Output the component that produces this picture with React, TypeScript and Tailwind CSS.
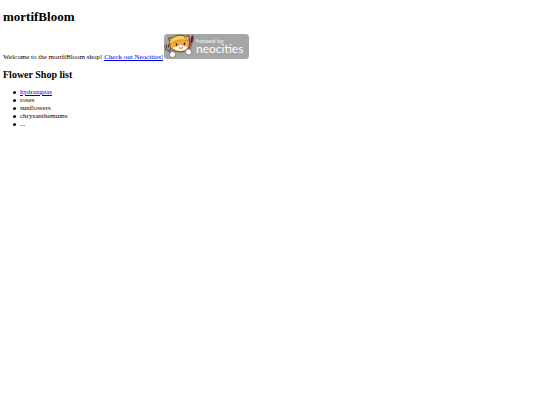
const flowers = ["hydrangeas", "roses", "sunflowers", "chrysanthemums", "..."]

function NeocitiesBadge() {
  return (
    <svg
      viewBox="0 0 85 25"
      className="inline-block h-[25px] w-[85px] align-baseline"
      role="img"
      aria-label="Hosted by Neocities"
    >
      <rect width="85" height="25" rx="3.5" fill="#a6a6a6" />

      {/* Fork */}
      <path d="M1 11l1.500 4.500 3.200-.8-.6-4.500M3.200 10.500l1 4.700 3.800 5" fill="none" stroke="#333" strokeWidth="2" />
      <path d="M1 11l1.500 4.500 3.200-.8-.6-4.500M3.200 10.500l1 4.700 3.800 5" fill="none" stroke="#ccc" strokeWidth="0.8" />

      {/* Brush */}
      <path d="M25 17L27.800 8" stroke="#444" strokeWidth="1.800" />
      <path d="M25.200 16.500L27.600 9" stroke="#d66" strokeWidth="1" />
      <path d="M26.800 8c-.4-2.500.4-5 1.900-6.500 .9 2 .6 4.500-.6 6.700z" fill="#8a2020" stroke="#3a1515" strokeWidth="0.6" />

      {/* Cat */}
      <path
        d="M4.500 4l4.500-.2C12 .8 19 .4 21.500 2.500l3.500-1 .5 6.500c.4 4-1.500 8-5 9.200-4 1.200-8.500.8-11.500-1C6 14 4.800 11.500 6 8.500z"
        fill="#f3a548"
        stroke="#4a2c10"
        strokeWidth="0.8"
      />
      <path d="M8.500 13.500c1.500-.8 3-.8 4.800-.8l3.500-2 3.200 1.500 3.800.3c-.8 2.600-2.800 3.800-5.500 4.200-3.500.4-7.800-.2-9.800-3.200z" fill="#fff5e4" />
      <path d="M5.500 8C7.500 1.500 19 0 24 7C18 4.800 11 6 7 10z" fill="#f9cf4e" stroke="#a06c1c" strokeWidth="0.5" />
      <path d="M9.500 5c3-2.500 7-3 10.500-1.800" fill="none" stroke="#ffed92" strokeWidth="0.9" />
      <ellipse cx="12.500" cy="10.500" rx="0.8" ry="1.200" fill="#222" />
      <ellipse cx="20.500" cy="9.800" rx="0.8" ry="1.200" fill="#222" />
      <path d="M15 13.600l2 .9 2-1.200" fill="none" stroke="#333" strokeWidth="0.6" />

      {/* Paws */}
      <circle cx="8.500" cy="20.500" r="3" fill="#fff" stroke="#555" strokeWidth="0.6" />
      <circle cx="24.500" cy="18" r="3" fill="#fff" stroke="#555" strokeWidth="0.6" />

      <text x="32" y="9" fill="#fff" fontSize="6" fontFamily="'Open Sans', sans-serif">
        hosted by
      </text>
      <text x="32" y="19" fill="#fff" fontSize="12" fontFamily="Lato, sans-serif">
        neocities
      </text>
    </svg>
  )
}

export default function App() {
  return (
    <main className="px-[3px] py-[9px] font-['Liberation_Serif',serif] text-[7px] leading-2 text-black">
      <h1 className="text-[13px] leading-4 font-bold">mortifBloom</h1>
      <p className="mt-[9px]">
        Welcome to the mortfiBloom shop!{" "}
        <a href="https://neocities.org" className="text-[#0000ee] underline">
          Check out Neocities!
        </a>
        <a href="https://neocities.org" className="ml-px">
          <NeocitiesBadge />
        </a>
      </p>
      <h2 className="mt-2 text-[10px] leading-3 font-bold">Flower Shop list</h2>
      <ul className="mt-[7px] pl-[10px]">
        {flowers.map((flower) => (
          <li
            key={flower}
            className="flex items-center gap-1 before:size-[3px] before:rounded-full before:bg-black"
          >
            {flower === "hydrangeas" ? (
              <a href="#hydrangeas" className="text-[#0000ee] underline">
                {flower}
              </a>
            ) : (
              flower
            )}
          </li>
        ))}
      </ul>
    </main>
  )
}
